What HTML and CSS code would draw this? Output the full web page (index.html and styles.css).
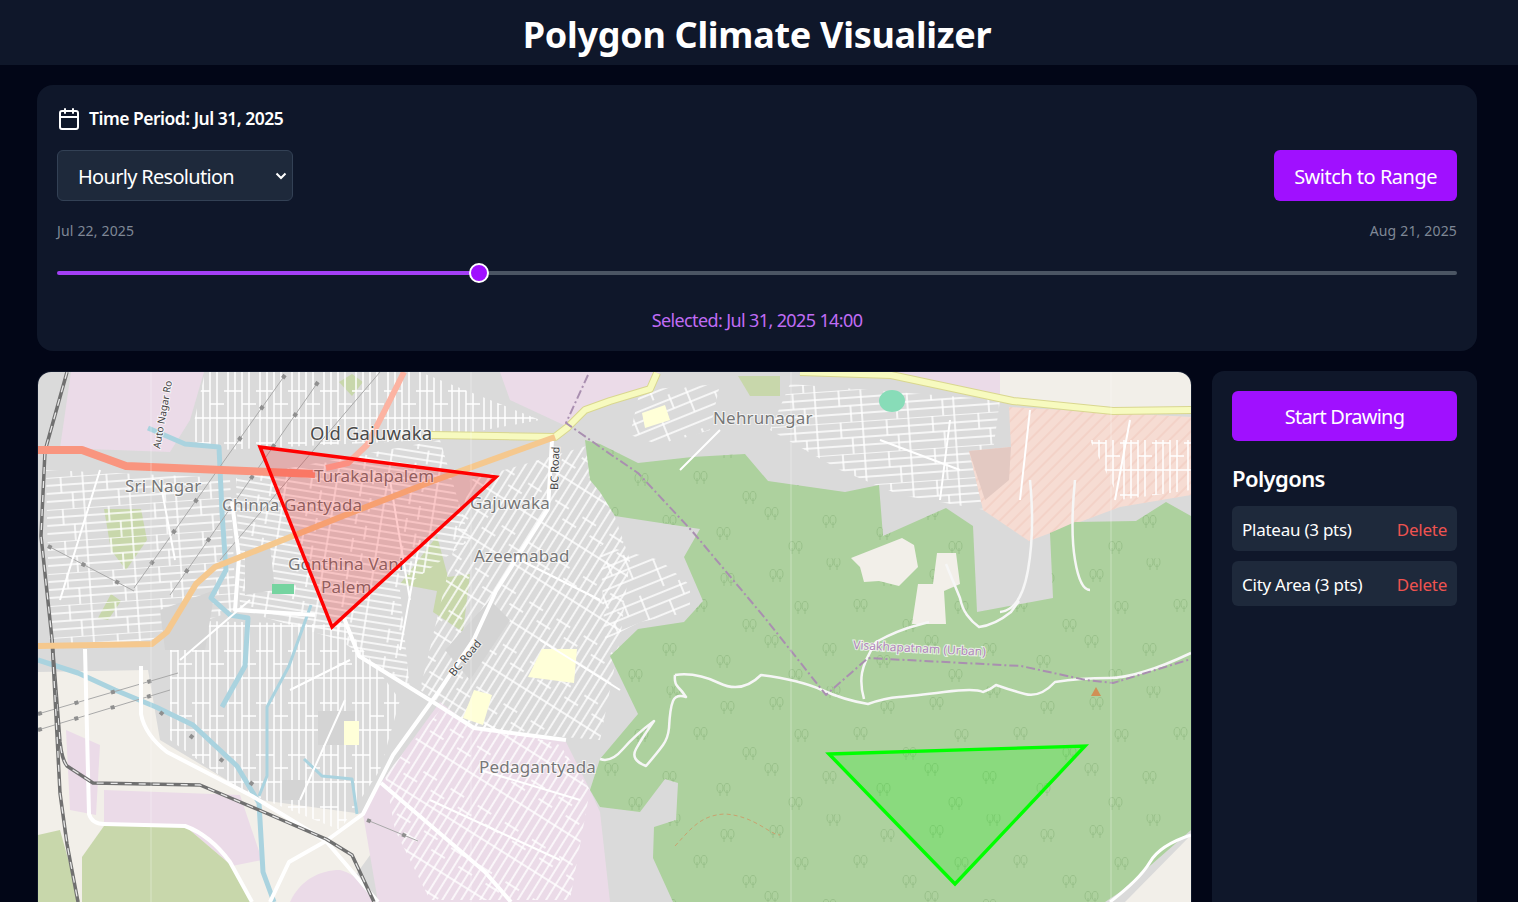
FILE: index.html
```html
<!DOCTYPE html>
<html lang="en">
<head>
  <meta charset="UTF-8">
  <meta name="viewport" content="width=device-width, initial-scale=1.0">
  <title>Polygon Climate Visualizer</title>
  <link rel="stylesheet" href="styles.css">
</head>
<body>

<header class="topbar">
  <h1>Polygon Climate Visualizer</h1>
</header>

<main class="content">
  <section class="timeline">
    <div class="timeline-title">
      <svg class="calendar-icon" width="24" height="24" viewBox="0 0 24 24" fill="none" stroke="currentColor" stroke-width="2" stroke-linecap="round" stroke-linejoin="round">
        <rect x="3" y="4" width="18" height="18" rx="2"></rect>
        <path d="M16 2v4M8 2v4M3 10h18"></path>
      </svg>
      <span>Time Period: Jul 31, 2025</span>
    </div>
    <div class="timeline-controls">
      <select class="resolution">
        <option>Hourly Resolution</option>
        <option>Daily Resolution</option>
      </select>
      <button class="btn">Switch to Range</button>
    </div>
    <div class="timeline-dates">
      <span>Jul 22, 2025</span>
      <span>Aug 21, 2025</span>
    </div>
    <input class="slider" type="range" min="0" max="720" value="215" style="--fill: 30.1%">
    <p class="selected">Selected: Jul 31, 2025 14:00</p>
  </section>

  <div class="workspace">
    <div class="map">
      <svg class="map-svg" width="1153" height="530" viewBox="38 372 1153 530">
        <defs>
          <pattern id="streets-a" width="46" height="32" patternUnits="userSpaceOnUse" patternTransform="rotate(-4)">
            <path class="grid-line" d="M0 0H46M0 8H46M0 16H46M0 24H46M3 0V32M27 0V16M38 16V32"></path>
          </pattern>
          <pattern id="streets-b" width="50" height="28" patternUnits="userSpaceOnUse" patternTransform="rotate(9)">
            <path class="grid-line" d="M0 3H50M0 10H50M0 17H50M0 24H50M8 0V28M33 0V14M44 14V28"></path>
          </pattern>
          <pattern id="streets-c" width="32" height="52" patternUnits="userSpaceOnUse">
            <path class="grid-line" d="M4 0V52M11 0V52M18 0V52M25 0V52M0 2H32M0 27H18M18 40H32"></path>
          </pattern>
          <pattern id="streets-d" width="32" height="50" patternUnits="userSpaceOnUse" patternTransform="rotate(32)">
            <path class="grid-line" d="M4 0V50M12 0V50M20 0V50M28 0V50M0 6H32M0 30H16M16 42H32"></path>
          </pattern>
          <pattern id="streets-e" width="60" height="44" patternUnits="userSpaceOnUse" patternTransform="rotate(-22)">
            <path class="grid-line" d="M0 5H60M0 15H60M0 26H60M0 37H60M10 0V26M36 15V44M52 0V15"></path>
          </pattern>
          <pattern id="hatch" width="9" height="9" patternUnits="userSpaceOnUse" patternTransform="rotate(-45)">
            <path class="hatch-line" d="M0 4H9"></path>
          </pattern>
          <g id="tree-mark">
            <path d="M-4 6V0M3 6V0"></path>
            <ellipse cx="-4" cy="-2" rx="3" ry="4.5"></ellipse>
            <ellipse cx="3" cy="-2" rx="3" ry="4.5"></ellipse>
          </g>
          <pattern id="trees" width="160" height="128" patternUnits="userSpaceOnUse" x="600" y="430">
            <use class="tree" href="#tree-mark" x="17" y="18"></use>
            <use class="tree" href="#tree-mark" x="74" y="6"></use>
            <use class="tree" href="#tree-mark" x="128" y="22"></use>
            <use class="tree" href="#tree-mark" x="42" y="50"></use>
            <use class="tree" href="#tree-mark" x="101" y="48"></use>
            <use class="tree" href="#tree-mark" x="150" y="68"></use>
            <use class="tree" href="#tree-mark" x="12" y="84"></use>
            <use class="tree" href="#tree-mark" x="70" y="92"></use>
            <use class="tree" href="#tree-mark" x="124" y="104"></use>
            <use class="tree" href="#tree-mark" x="36" y="118"></use>
          </pattern>
          <filter id="soft"><feGaussianBlur stdDeviation="0.4"></feGaussianBlur></filter>
        </defs>

        <g filter="url(#soft)">
          <rect class="land-grey" x="38" y="372" width="1153" height="530"></rect>

          <!-- land use -->
          <path class="land-cream" d="M38 672L148 670L160 740L260 800L363 814L381 840L352 880L300 902H38Z"></path>
          <path class="land-cream" d="M1191 835L1125 902H1191Z"></path>
          <path class="land-cream" d="M1000 372H1191V412L1000 400Z"></path>
          <path class="land-pink" d="M71 372H204L190 420L170 452L60 448Z"></path>
          <path class="land-pink" d="M500 372H660L650 389L585 410L568 427L510 400Z"></path>
          <path class="land-pink" d="M800 372H1000V396L900 378Z"></path>
          <path class="land-pink" d="M66 730L100 745L96 815L70 810Z"></path>
          <path class="land-pink" d="M104 790L240 795L262 860L232 866L185 826H104Z"></path>
          <path class="land-pink" d="M290 902C300 880 320 870 340 870C358 875 372 890 378 902Z"></path>
          <path class="land-pink" d="M363 814L381 783L440 702L474 728L566 742L590 790L600 812L610 902H378Z"></path>
          <path class="land-scrub" d="M82 857L104 826H185L232 866L252 902H82Z"></path>
          <path class="land-scrub" d="M38 835L60 830L80 902H38Z"></path>
          <path class="land-scrub" d="M104 509L141 509L147 540L126 570L111 550Z"></path>
          <path class="land-scrub" d="M98 618L111 594L121 601L108 620Z"></path>
          <path class="land-scrub" d="M339 382L352 374L363 382L352 396Z"></path>
          <path class="land-scrub" d="M400 584L437 536L448 577L470 574L463 632L433 612L437 591Z"></path>
          <path class="land-scrub" d="M738 376L780 376V396L750 396Z"></path>

          <!-- street grids -->
          <path fill="url(#streets-a)" d="M46 470L230 478L236 610L150 640L50 650Z"></path>
          <path fill="url(#streets-b)" d="M236 478L440 440L470 540L400 590L410 690L340 640L240 610Z"></path>
          <path fill="url(#streets-c)" d="M170 620L345 625L400 700L380 770L340 830L240 790L170 740Z"></path>
          <path fill="url(#streets-d)" d="M470 480L590 445L630 560L620 640L600 740L480 730L420 690Z"></path>
          <path fill="url(#streets-c)" d="M205 372H420L540 420L430 440L220 450L190 440Z"></path>
          <path fill="url(#streets-e)" d="M640 390L720 384L710 430L660 445L630 435Z"></path>
          <path fill="url(#streets-a)" d="M790 384L1000 400L985 510L900 495L840 470L770 430Z"></path>
          <path fill="url(#streets-d)" d="M385 775L440 710L560 745L590 790L570 900H430L395 830Z"></path>
          <path fill="url(#streets-e)" d="M600 545L660 560L690 585L690 612L640 622L605 640Z"></path>
          <path class="land-hatch" d="M1009 407L1191 417V495L1120 507L1029 541L983 510L969 451L1011 447Z"></path>
          <path fill="url(#hatch)" d="M1009 407L1191 417V495L1120 507L1029 541L983 510L969 451L1011 447Z"></path>
          <path class="land-brick" d="M969 451L1011 447L1009 480L985 500Z"></path>
          <path fill="url(#streets-c)" d="M1090 440L1191 440V490L1120 500Z"></path>

          <!-- open blocks inside the grids -->
          <path class="land-grey-dark" d="M318 711H355V745H318Z"></path>
          <path class="land-grey-dark" d="M282 780H305V800H282Z"></path>
          <path class="land-grey-dark" d="M245 550L270 545L275 590L245 595Z"></path>
          <path class="land-grey-dark" d="M160 610L215 590L205 650L165 650Z"></path>
          <path class="land-grey-dark" d="M445 650L490 600L510 620L470 680Z"></path>

          <!-- forest -->
          <path class="forest" d="M585 440L600 444L638 463L692 457L745 454L768 481L845 492L879 485L883 536L946 508L973 526L977 612L1053 598L1050 533L1075 522L1136 521L1166 502L1191 516V830L1120 892L1105 902H673L653 858L654 827L676 820L678 783L665 779L640 812L600 807L590 790L600 759L638 714L610 656L638 629L684 622L703 601L684 557L700 529L615 516L600 492L590 480Z"></path>
          <path fill="url(#trees)" d="M585 440L600 444L638 463L692 457L745 454L768 481L845 492L879 485L883 536L946 508L973 526L977 612L1053 598L1050 533L1075 522L1136 521L1166 502L1191 516V830L1120 892L1105 902H673L653 858L654 827L676 820L678 783L665 779L640 812L600 807L590 790L600 759L638 714L610 656L638 629L684 622L703 601L684 557L700 529L615 516L600 492L590 480Z"></path>
          <path class="land-cream" d="M851 558L902 538L914 545L918 567L899 586L879 581L864 582L860 567Z"></path>
          <path class="land-cream" d="M937 553L956 553L960 584L944 591L946 624L912 624L918 584L933 584Z"></path>

          <!-- buildings and water -->
          <path class="land-yellow" d="M528 677L542 649L577 649L574 683Z"></path>
          <path class="land-yellow" d="M463 718L474 690L492 695L483 725Z"></path>
          <path class="land-yellow" d="M344 721H359V745H344Z"></path>
          <path class="land-yellow" d="M642 413L665 405L670 420L645 428Z"></path>
          <rect class="pitch" x="272" y="584" width="22" height="10"></rect>
          <ellipse class="pond" cx="892" cy="401" rx="13" ry="11"></ellipse>

          <path class="water" d="M148 428L185 444L219 447L222 512L226 570L211 598L230 615L248 618L245 666L222 707"></path>
          <path class="water" d="M38 660L78 673L115 690L156 707L193 725L237 766L259 803L263 872L274 902"></path>
          <path class="water water-thin" d="M311 605L289 666L267 707L267 776L259 796"></path>
          <path class="water water-thin" d="M304 759L322 776L352 779L357 814"></path>

          <!-- roads -->
          <path class="road-power" d="M285 375L134 588M318 382L170 595M48 546L134 591M38 714L178 673M38 730L170 690M380 372L220 560M367 820L418 841"></path>
          <path class="road-tower" d="M285 375L134 588M318 382L170 595M48 546L134 591M38 714L178 673M38 730L170 690M160 712L260 790M367 820L418 841"></path>
          <path class="road-local" d="M100 470L60 600M160 480L175 560M250 600L180 660M390 480L410 600M290 690L350 660M300 800L345 700M420 540L400 650M520 560L600 600M540 640L620 690M480 770L580 800M430 800L560 860M880 440L960 470M950 420L940 500M720 430L680 470M1030 410L1020 500M1130 420L1115 500"></path>
          <path class="road-minor" d="M675 675Q696 672 719 683T761 675Q800 680 822 690T868 704Q885 698 899 697T944 692T983 692Q990 690 996 685Q1010 690 1025 694T1055 682Q1080 678 1109 678T1191 653"></path>
          <path class="road-minor" d="M675 675Q674 683 678 687T686 697Q676 694 673 701T669 728Q668 738 663 745T646 766Q630 760 636 749T654 721Q635 735 623 749T600 759"></path>
          <path class="road-minor" d="M864 699Q860 685 862 673T876 642Q898 630 918 625L929 622M946 564L960 598Q962 608 967 615T979 627Q995 625 1011 612L1019 601"></path>
          <path class="road-minor" d="M1030 480Q1035 530 1028 570T1000 612M1075 480Q1070 530 1075 560T1090 590"></path>
          <path class="road-white road-white-thin" d="M1191 835Q1160 845 1150 862T1110 902"></path>
          <path class="road-white" d="M552 440L548 509L522 550L496 591L474 639L437 694L393 755L363 814L326 841L289 862L270 902"></path>
          <path class="road-white" d="M232 502L239 557L235 610L315 615"></path>
          <path class="road-white" d="M344 618L359 656L433 702L474 728L566 740"></path>
          <path class="road-white" d="M141 666V714Q145 735 167 752L252 796L326 841L378 902"></path>
          <path class="road-white" d="M85 649L89 814Q92 824 104 824L185 826Q210 835 230 862L252 902"></path>
          <path class="road-white" d="M381 783L485 872L511 902"></path>
          <path class="rail-base" d="M67 372L45 451L41 536L52 639L60 742Q62 760 67 766L93 783L200 785L259 810L326 839L352 855L374 902"></path>
          <path class="rail-dash" d="M67 372L45 451L41 536L52 639L60 742Q62 760 67 766L93 783L200 785L259 810L326 839L352 855L374 902"></path>
          <path class="rail-base" d="M52 639L60 793L67 844L78 902"></path>
          <path class="rail-dash" d="M52 639L60 793L67 844L78 902"></path>
          <path class="road-edge" d="M431 435L555 437L568 427L585 410L610 401L650 389L657 373"></path>
          <path class="road-yellow" d="M431 435L555 437L568 427L585 410L610 401L650 389L657 373"></path>
          <path class="road-edge" d="M800 372L891 375L1013 401L1113 411L1191 410"></path>
          <path class="road-yellow" d="M800 372L891 375L1013 401L1113 411L1191 410"></path>
          <path class="road-orange" d="M38 646L152 644L167 632L196 584L215 567L348 514L433 481L555 437"></path>
          <path class="road-salmon" d="M38 450L82 450L126 466L222 470L315 474"></path>
          <path class="road-salmon road-salmon-light" d="M326 468L348 463L367 445L385 410L404 372"></path>
          <path class="boundary" d="M588 375L566 423L610 454L638 473L692 531L765 618L826 695L868 658L1021 666L1086 680L1113 683L1191 659"></path>
          <path class="track" d="M675 846C690 830 700 815 725 814C755 816 770 835 780 835"></path>
          <path class="peak" d="M1096 687L1101 696H1091Z"></path>

          <!-- tile seams -->
          <path class="seam" d="M151 372V902M471 372V902M791 372V902M1111 372V902"></path>
        </g>

        <text class="map-label map-label-big" x="310" y="440">Old Gajuwaka</text>
        <text class="map-label" x="314" y="482">Turakalapalem</text>
        <text class="map-label" x="125" y="492">Sri Nagar</text>
        <text class="map-label" x="222" y="511">Chinna Gantyada</text>
        <text class="map-label" x="470" y="509">Gajuwaka</text>
        <text class="map-label" x="474" y="562">Azeemabad</text>
        <text class="map-label" x="288" y="570">Gonthina Vani</text>
        <text class="map-label" x="321" y="593">Palem</text>
        <text class="map-label" x="479" y="773">Pedagantyada</text>
        <text class="map-label" x="713" y="424">Nehrunagar</text>
        <text class="map-road-label" transform="translate(558 490) rotate(-88)">BC Road</text>
        <text class="map-road-label" transform="translate(454 677) rotate(-50)">BC Road</text>
        <text class="map-road-label map-road-label-small" transform="translate(160 449) rotate(-80)">Auto Nagar Ro</text>
        <text class="map-admin-label" transform="translate(853 649) rotate(3)">Visakhapatnam (Urban)</text>

        <polygon class="zone zone-red" points="260,447 496,477 332,627"></polygon>
        <polygon class="zone zone-green" points="829,754 1085,746 955,884"></polygon>
      </svg>
    </div>

    <aside class="sidebar">
      <button class="btn btn-wide">Start Drawing</button>
      <h2>Polygons</h2>
      <div class="polygon-item">
        <span>Plateau (3 pts)</span>
        <a class="delete" href="#">Delete</a>
      </div>
      <div class="polygon-item">
        <span>City Area (3 pts)</span>
        <a class="delete" href="#">Delete</a>
      </div>
    </aside>
  </div>
</main>

</body>
</html>
```

FILE: styles.css
```css
body {
  margin: 0;
  height: 100vh;
  overflow: hidden;
  font-family: "Noto Sans", Arial, sans-serif;
  background-color: #020617;
  color: #ffffff;
}
.topbar {
  height: 65px;
  box-sizing: border-box;
  padding: 3px 4px 0 0;
  background-color: #0f172a;
  display: flex;
  align-items: center;
  justify-content: center;
}
.topbar h1 {
  margin: 0;
  font-size: 36px;
  font-weight: 700;
  letter-spacing: -0.28px;
}
.content {
  padding: 20px 41px 0 37px;
}
.timeline {
  height: 266px;
  box-sizing: border-box;
  padding: 20px;
  background-color: #0f172a;
  border-radius: 16px;
}
.timeline-title {
  display: flex;
  align-items: center;
  gap: 8px;
  height: 27px;
  font-size: 17.5px;
  font-weight: 600;
  letter-spacing: -0.5px;
}
.timeline-title span {
  margin-top: -1px;
}
.timeline-controls {
  margin-top: 18px;
  display: flex;
  align-items: center;
  justify-content: space-between;
}
.resolution {
  -webkit-appearance: none;
  appearance: none;
  width: 236px;
  height: 51px;
  padding: 2px 6px 0 20px;
  background-color: #1e293b;
  background-image: url("data:image/svg+xml,%3Csvg xmlns='http://www.w3.org/2000/svg' width='12' height='8'%3E%3Cpath d='M1.5 1.5L6 6L10.5 1.5' fill='none' stroke='white' stroke-width='2'/%3E%3C/svg%3E");
  background-repeat: no-repeat;
  background-position: right 5px center;
  border: 1px solid #334155;
  border-radius: 6px;
  color: #ffffff;
  font-family: inherit;
  font-size: 20px;
  letter-spacing: -0.7px;
}
.btn {
  height: 51px;
  padding: 2px 20px 0;
  background-color: #a010ff;
  border: none;
  border-radius: 6px;
  color: #ffffff;
  font-family: inherit;
  font-size: 20px;
  letter-spacing: -0.5px;
  cursor: pointer;
}
.timeline-dates {
  margin-top: 20px;
  display: flex;
  justify-content: space-between;
  font-size: 14px;
  line-height: 20px;
  letter-spacing: 0.17px;
  color: #7f8896;
}
.slider {
  -webkit-appearance: none;
  appearance: none;
  display: block;
  width: 100%;
  height: 4px;
  margin: 30px 0 0;
  border-radius: 2px;
  background: linear-gradient(to right, #a33ff5 var(--fill), #4b5563 var(--fill));
}
.slider::-webkit-slider-thumb {
  -webkit-appearance: none;
  width: 20px;
  height: 20px;
  box-sizing: border-box;
  border: 2px solid #ffffff;
  border-radius: 50%;
  background-color: #a010ff;
}
.selected {
  margin: 33px 0 0;
  text-align: center;
  font-size: 18px;
  line-height: 24px;
  letter-spacing: -0.62px;
  color: #c06cf5;
}
.workspace {
  margin-top: 20px;
  display: grid;
  grid-template-columns: 1155px 265px;
  gap: 20px;
}
.map {
  height: 531px;
  box-sizing: border-box;
  border: 1px solid #0f172a;
  border-bottom: none;
  border-radius: 14px 14px 0 0;
  overflow: hidden;
}
.map-svg {
  display: block;
}
.sidebar {
  height: 531px;
  box-sizing: border-box;
  padding: 20px;
  background-color: #0f172a;
  border-radius: 12px 12px 0 0;
}
.btn-wide {
  display: block;
  width: 100%;
  height: 50px;
  padding-top: 0;
  letter-spacing: -0.75px;
}
.sidebar h2 {
  margin: 21px 0 11px;
  font-size: 22px;
  line-height: 33px;
  font-weight: 600;
  letter-spacing: -0.6px;
}
.polygon-item {
  height: 45px;
  box-sizing: border-box;
  margin-bottom: 10px;
  padding: 2px 10px 0;
  display: flex;
  align-items: center;
  justify-content: space-between;
  background-color: #1e293b;
  border-radius: 6px;
  font-size: 17px;
  letter-spacing: -0.25px;
}
.delete {
  color: #ef5350;
  text-decoration: none;
}

/* map land */
.land-grey { fill: #dadada; }
.land-grey-dark { fill: #d4d4d4; }
.land-cream { fill: #f2efe9; }
.land-pink { fill: #ebdbe8; }
.land-scrub { fill: #c8d7ab; }
.land-yellow { fill: #ffffd8; }
.land-hatch { fill: #f6dcd3; }
.land-brick { fill: #e3c9c2; }
.forest { fill: #add19e; }
.pitch { fill: #74d4a0; }
.pond { fill: #88dcb8; }
.grid-line {
  fill: none;
  stroke: #ffffff;
  stroke-width: 1.5;
}
.hatch-line {
  fill: none;
  stroke: #f0c8bc;
  stroke-width: 1;
}
.tree {
  fill: none;
  stroke: #98c089;
  stroke-width: 1;
}

/* map lines */
.water, .road-power, .road-tower, .road-local, .road-minor, .road-white, .rail-base, .rail-dash,
.road-edge, .road-yellow, .road-orange, .road-salmon, .boundary, .track, .seam {
  fill: none;
  stroke-linejoin: round;
}
.water { stroke: #aad3df; stroke-width: 5; }
.water-thin { stroke-width: 3; }
.road-power { stroke: #a9a9a9; stroke-width: 1; }
.road-tower { stroke: #8f8f8f; stroke-width: 4; stroke-dasharray: 4 34; }
.road-local { stroke: #ffffff; stroke-width: 2; }
.road-minor { stroke: #f6f6f6; stroke-width: 2.5; }
.road-white { stroke: #ffffff; stroke-width: 4; }
.road-white-thin { stroke-width: 3; }
.rail-base { stroke: #707070; stroke-width: 3.5; }
.rail-dash { stroke: #e8e8e8; stroke-width: 1.3; stroke-dasharray: 7 7; }
.road-edge { stroke: #d9d78f; stroke-width: 8; }
.road-yellow { stroke: #f7fabf; stroke-width: 6; }
.road-orange { stroke: #f5c88e; stroke-width: 6; }
.road-salmon { stroke: #f9957f; stroke-width: 8; }
.road-salmon-light { stroke: #fcb3a2; stroke-width: 6; }
.boundary { stroke: #a98fb0; stroke-width: 2; stroke-dasharray: 9 3 2 3; }
.track { stroke: #c9a26e; stroke-width: 1; stroke-dasharray: 4 3; }
.peak { fill: #d08f55; }
.seam { stroke: #ffffff; stroke-opacity: 0.35; stroke-width: 1; }

/* map labels */
.map-label, .map-road-label, .map-admin-label {
  paint-order: stroke;
  stroke: #ffffff;
  stroke-opacity: 0.7;
  stroke-width: 2px;
}
.map-label {
  font-size: 17px;
  letter-spacing: 0.2px;
  fill: #777777;
}
.map-label-big {
  font-size: 18.4px;
  fill: #4a4a4a;
}
.map-road-label {
  font-size: 11px;
  fill: #444444;
}
.map-road-label-small {
  font-size: 10px;
}
.map-admin-label {
  font-size: 12px;
  fill: #b186bb;
}
.zone {
  stroke-width: 3.4;
}
.zone-red {
  fill: rgba(255, 0, 0, 0.2);
  stroke: #ff0000;
}
.zone-green {
  fill: rgba(0, 255, 0, 0.2);
  stroke: #00ff00;
}
```
